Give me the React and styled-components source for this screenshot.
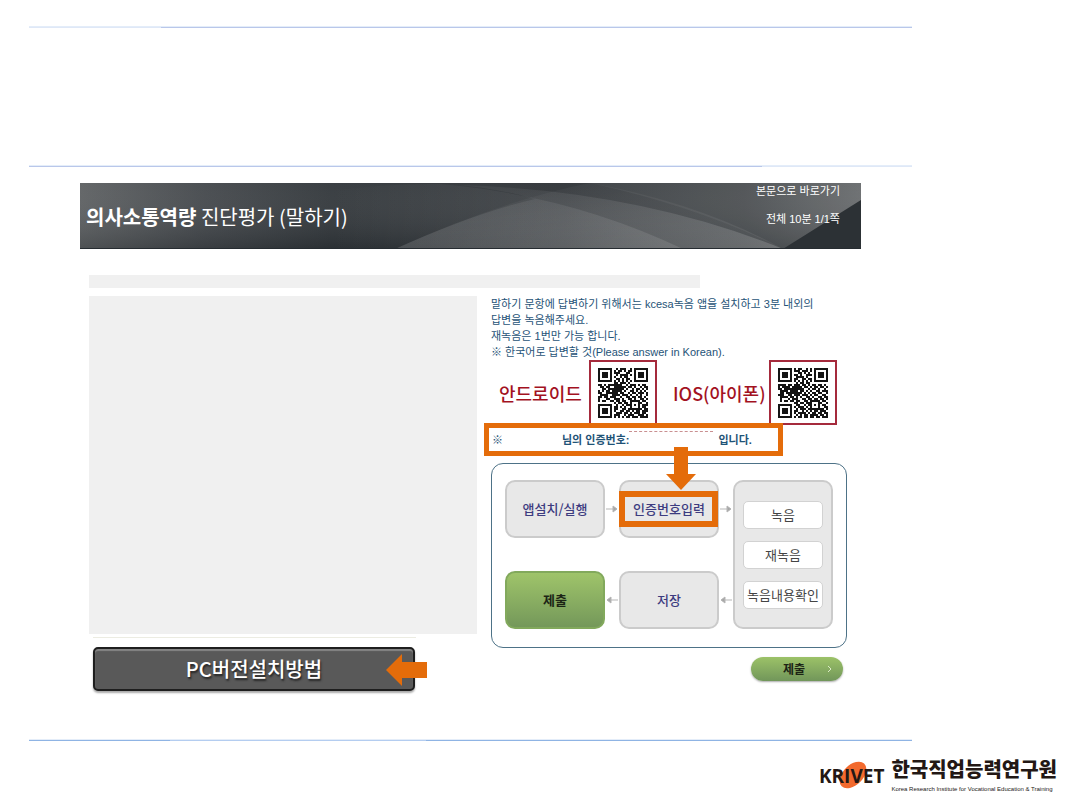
import styled, { createGlobalStyle } from "styled-components";

const COLORS = {
  orange: "#e46c0a",
  navy: "#1f5377",
  crimson: "#a3121f",
  step: "#3d3c80",
  panel: "#f0f0f0",
};

const QR_ANDROID = [
  "1111111001011100101111111",
  "1000001010110101101000001",
  "1011101011100011001011101",
  "1011101001011110101011101",
  "1011101010010110001011101",
  "1000001001101011001000001",
  "1111111010101010101111111",
  "0000000011011101000000000",
  "1101011111110010111010110",
  "0110110011111101101001011",
  "0011011111111010010110101",
  "1010110111110100110101010",
  "1100111111011001011011101",
  "0111100111101110100101001",
  "1101101110010011011011010",
  "1000110011101001101001101",
  "1011001101101100111110110",
  "0000000010110110100011001",
  "1111111001001011101010111",
  "1000001011010100100010110",
  "1011101011001101111111011",
  "1011101010011011010110111",
  "1011101001110110101110110",
  "1000001011100101110011101",
  "1111111010101011011101111",
];

const QR_IOS = [
  "1111111010110010101111111",
  "1000001011101110101000001",
  "1011101000110101001011101",
  "1011101011010011101011101",
  "1011101001111010001011101",
  "1000001011001101101000001",
  "1111111010101010101111111",
  "0000000001011011000000000",
  "1111011011101101011011010",
  "1011110111110110101101101",
  "1101111111111001011010010",
  "0111101111011010100110111",
  "0110111111110101011011001",
  "1110011011101110101100110",
  "0111101101010011010011011",
  "0100010111001101101101101",
  "0101101101100110111110110",
  "0000000011011011100011001",
  "1111111001100101101010110",
  "1000001010111010100010011",
  "1011101001011101111111101",
  "1011101011001010101101110",
  "1011101010111101011011011",
  "1000001001010110111101101",
  "1111111010110110110110111",
];

const INSTRUCTIONS = [
  "말하기 문항에 답변하기 위해서는 kcesa녹음 앱을 설치하고 3분 내외의",
  "답변을 녹음해주세요.",
  "재녹음은 1번만 가능 합니다.",
  "※ 한국어로 답변할 것(Please answer in Korean).",
];

const RECORD_ACTIONS = ["녹음", "재녹음", "녹음내용확인"];

function QrCode({ rows, label }) {
  return (
    <QrFrame>
      <svg width="50" height="50" viewBox="0 0 25 25" role="img" aria-label={label} shapeRendering="crispEdges">
        {rows.map((row, y) =>
          [...row].map((cell, x) =>
            cell === "1" ? <rect key={`${x}-${y}`} x={x} y={y} width="1" height="1" fill="#151515" /> : null
          )
        )}
      </svg>
    </QrFrame>
  );
}

function BannerArt() {
  return (
    <Art viewBox="0 0 781 66" preserveAspectRatio="none" aria-hidden="true">
      <defs>
        <linearGradient id="base" x1="0" y1="0" x2="1" y2="0">
          <stop offset="0" stopColor="#5c5f61" />
          <stop offset="0.16" stopColor="#42464a" />
          <stop offset="0.32" stopColor="#303539" />
          <stop offset="0.62" stopColor="#2d3135" />
          <stop offset="0.85" stopColor="#414548" />
          <stop offset="1" stopColor="#606365" />
        </linearGradient>
        <linearGradient id="shade" x1="0" y1="0" x2="0" y2="1">
          <stop offset="0" stopColor="#fff" stopOpacity="0.05" />
          <stop offset="1" stopColor="#14191d" stopOpacity="0.2" />
        </linearGradient>
        <linearGradient id="arch" x1="0" y1="0" x2="1" y2="0">
          <stop offset="0" stopColor="#fff" stopOpacity="0" />
          <stop offset="1" stopColor="#fff" stopOpacity="0.11" />
        </linearGradient>
        <linearGradient id="wave" x1="0" y1="0" x2="1" y2="1">
          <stop offset="0" stopColor="#fff" stopOpacity="0.03" />
          <stop offset="1" stopColor="#fff" stopOpacity="0.22" />
        </linearGradient>
      </defs>
      <rect width="781" height="66" fill="url(#base)" />
      <rect width="781" height="66" fill="url(#shade)" />
      <path d="M250 8 Q310 0 360 1 Q490 12 603 66 L250 66Z" fill="url(#arch)" />
      <path d="M315 66 Q420 18 510 0 Q620 20 703 66Z" fill="url(#wave)" opacity="0.4" />
      <path d="M380 2 Q560 8 703 66 L315 66 Q395 30 455 16 Q420 6 380 2Z" fill="url(#wave)" opacity="0.8" />
      <path d="M510 0 Q620 24 703 66 L781 17 L781 0Z" fill="#fff" opacity="0.05" />
      <path d="M703 66 L781 17 L781 66Z" fill="#2c3135" />
      <rect y="65" width="781" height="1" fill="#262c31" />
    </Art>
  );
}

function FlowArrow({ left }) {
  return (
    <svg width="12" height="10" viewBox="0 0 12 10" aria-hidden="true">
      {left ? (
        <path d="M12 5H4M5 2L1 5L5 8Z" stroke="#b5b5b5" strokeWidth="1" fill="#a5a5a5" />
      ) : (
        <path d="M0 5H8M7 2L11 5L7 8Z" stroke="#b5b5b5" strokeWidth="1" fill="#a5a5a5" />
      )}
    </svg>
  );
}

function App() {
  return (
    <Page>
      <GlobalStyle />
      <Rule $from="#dfe8f7" $mid="#b9c7ea" $end="#b9c7ea" $a="15%" $b="100%" />
      <TitleArea />
      <Rule $from="#b9c7ea" $mid="#b9c7ea" $end="#dfe8f7" $a="50%" $b="83%" />

      <Content>
        <Banner>
          <BannerArt />
          <BannerTitle>
            <strong>의사소통역량</strong> 진단평가 (말하기)
          </BannerTitle>
          <BannerMeta>
            <SkipLink href="#answer">본문으로 바로가기</SkipLink>
            <span>전체 10분 1/1쪽</span>
          </BannerMeta>
        </Banner>

        <Body>
          <Strip />
          <Columns>
            <Left>
              <Question />
              <Divider />
              <PcButton type="button">
                PC버전설치방법
                <PcArrow width="41" height="32" viewBox="0 0 41 32" aria-hidden="true">
                  <path d="M0 16L16 0V8H41V24H16V32Z" fill={COLORS.orange} />
                </PcArrow>
              </PcButton>
            </Left>

            <Right id="answer">
              <Instructions>
                {INSTRUCTIONS.map((line) => (
                  <p key={line}>{line}</p>
                ))}
              </Instructions>
              <QrRow>
                <QrLabel>안드로이드</QrLabel>
                <QrCode rows={QR_ANDROID} label="안드로이드 QR" />
                <QrLabel $second>IOS(아이폰)</QrLabel>
                <QrCode rows={QR_IOS} label="IOS QR" />
              </QrRow>
              <Notice>
                <span>※</span>
                <NoticeName>님의 인증번호:</NoticeName>
                <CodeSlot />
                <span>입니다.</span>
                <DownArrow width="30" height="43" viewBox="0 0 30 43" aria-hidden="true">
                  <path d="M8 0H22V27H30L15 43L0 27H8Z" fill={COLORS.orange} />
                </DownArrow>
              </Notice>

              <Diagram>
                <Step>앱설치/실행</Step>
                <FlowArrow />
                <Step>
                  인증번호입력
                  <Highlight />
                </Step>
                <FlowArrow />
                <RecordStep>
                  {RECORD_ACTIONS.map((action) => (
                    <RecordAction key={action}>{action}</RecordAction>
                  ))}
                </RecordStep>
                <Step $done>제출</Step>
                <FlowArrow left />
                <Step>저장</Step>
                <FlowArrow left />
              </Diagram>

              <SubmitButton type="button">
                제출
                <svg width="5" height="8" viewBox="0 0 5 8" aria-hidden="true">
                  <path d="M1 1L4 4L1 7" stroke="#dcebc8" fill="none" />
                </svg>
              </SubmitButton>
            </Right>
          </Columns>
        </Body>
      </Content>

      <Rule $from="#8fb4e4" $mid="#b4cdf0" $end="#8fb4e4" $a="16%" $b="45%" />

      <Footer>
        <Krivet>
          <svg width="36" height="30" viewBox="0 0 36 30" aria-hidden="true">
            <ellipse cx="18" cy="15" rx="16" ry="10" transform="rotate(-45 18 15)" fill="#f26a2e" />
          </svg>
          <span>KRIVET</span>
        </Krivet>
        <Institute>
          <InstituteName>한국직업능력연구원</InstituteName>
          <InstituteSub>Korea Research Institute for Vocational Education &amp; Training</InstituteSub>
        </Institute>
      </Footer>
    </Page>
  );
}

const GlobalStyle = createGlobalStyle`
  * {
    box-sizing: border-box;
  }

  body {
    margin: 0;
    background: #fff;
    font-family: "Liberation Sans", "Noto Sans CJK KR", sans-serif;
  }

  p, h1 {
    margin: 0;
  }
`;

const Page = styled.div`
  padding-top: 26px;
`;

const Rule = styled.div`
  height: 2px;
  margin: 0 168px 0 29px;
  background: linear-gradient(
    to right,
    ${({ $from }) => $from} ${({ $a }) => $a},
    ${({ $mid }) => $mid} ${({ $a }) => $a},
    ${({ $mid }) => $mid} ${({ $b }) => $b},
    ${({ $end }) => $end} ${({ $b }) => $b}
  );
  border-top: 1px solid #e4edf9;
`;

const TitleArea = styled.div`
  height: 137px;
`;

const Content = styled.main`
  margin: 16px 219px 48px 80px;
`;

const Banner = styled.header`
  position: relative;
  display: flex;
  justify-content: space-between;
  height: 66px;
  padding: 0 21px 0 6px;
  color: #fff;
  background: #33383c;
`;

const Art = styled.svg`
  position: absolute;
  inset: 0;
  width: 100%;
  height: 100%;
`;

const BannerTitle = styled.h1`
  position: relative;
  align-self: center;
  padding-top: 2px;
  font-family: "Noto Sans CJK KR", sans-serif;
  font-size: 20px;
  font-weight: 400;
  line-height: 24px;
  white-space: nowrap;

  strong {
    font-weight: 700;
  }
`;

const BannerMeta = styled.div`
  position: relative;
  display: flex;
  flex-direction: column;
  align-items: flex-end;
  gap: 12px;
  font-size: 11px;
  line-height: 16px;
`;

const SkipLink = styled.a`
  color: inherit;
  text-decoration: none;
`;

const Body = styled.div`
  padding: 26px 0 0 9px;
`;

const Strip = styled.div`
  height: 13px;
  margin-right: 161px;
  background: ${COLORS.panel};
`;

const Columns = styled.div`
  display: grid;
  grid-template-columns: minmax(0, 388fr) minmax(377px, 377fr);
  gap: 7px;
  margin-top: 8px;
`;

const Left = styled.section`
  display: flex;
  flex-direction: column;
`;

const Question = styled.div`
  height: 338px;
  background: ${COLORS.panel};
`;

const Divider = styled.div`
  height: 1px;
  margin: 3px 61px 0 4px;
  background: #ecece2;
`;

const PcButton = styled.button`
  position: relative;
  height: 44px;
  margin: 9px 62px 0 4px;
  padding: 0;
  border: 2px solid #1e1e1e;
  border-radius: 5px;
  background: #595959;
  box-shadow: inset 0 2px 1px #858585, 0 2px 2px #aaa;
  color: #fff;
  font-family: "Noto Sans CJK KR", sans-serif;
  font-size: 20px;
  font-weight: 500;
  line-height: 24px;
  text-shadow: 1px 2px 2px #222;
`;

const PcArrow = styled.svg`
  position: absolute;
  top: 5px;
  right: -14px;
`;

const Right = styled.section`
  padding-right: 14px;
`;

const Instructions = styled.div`
  padding-left: 7px;
  color: ${COLORS.navy};
  font-size: 11px;
  line-height: 16px;
  white-space: nowrap;
`;

const QrRow = styled.div`
  display: flex;
  align-items: center;
  padding-left: 15px;
`;

const QrLabel = styled.span`
  width: ${({ $second }) => ($second ? "112px" : "90px")};
  padding-left: ${({ $second }) => ($second ? "16px" : "0")};
  color: ${COLORS.crimson};
  font-family: "Noto Sans CJK KR", sans-serif;
  font-size: 18px;
  font-weight: 500;
  line-height: 24px;
  white-space: nowrap;
`;

const QrFrame = styled.div`
  display: grid;
  place-items: center;
  width: 68px;
  height: 65px;
  border: 2px solid #a52a3c;
  background: #fff;
`;

const Notice = styled.div`
  position: relative;
  display: flex;
  align-items: center;
  width: 299px;
  height: 33px;
  margin-top: -2px;
  padding-left: 3px;
  border: 5px solid ${COLORS.orange};
  background: #fff;
  color: ${COLORS.navy};
  font-size: 11px;
  font-weight: 700;
  line-height: 16px;
  white-space: nowrap;
`;

const NoticeName = styled.span`
  margin-left: 59px;
`;

const CodeSlot = styled.span`
  align-self: flex-start;
  flex: none;
  width: 84px;
  margin: 3px 5px 0 0;
  border-top: 1px dashed #c98f90;
`;

const DownArrow = styled.svg`
  position: absolute;
  z-index: 2;
  top: 19px;
  left: 177px;
`;

const Diagram = styled.div`
  display: grid;
  grid-template-columns: 100px 14px 100px 14px 100px;
  grid-template-rows: 58px 58px;
  row-gap: 33px;
  align-items: center;
  justify-items: center;
  justify-content: center;
  margin: 7px 0 0 7px;
  padding: 16px 0 18px;
  border: 1px solid #4d7287;
  border-radius: 12px;
`;

const Step = styled.div`
  position: relative;
  display: grid;
  place-items: center;
  width: 100%;
  height: 100%;
  border: 2px solid ${({ $done }) => ($done ? "#82a95c" : "#cbcbcb")};
  border-radius: 10px;
  background: ${({ $done }) => ($done ? "linear-gradient(#9fc46a, #74985a)" : "#e8e8e8")};
  color: ${({ $done }) => ($done ? "#1c2415" : COLORS.step)};
  font-family: "Noto Sans CJK KR", sans-serif;
  font-size: 13px;
  font-weight: ${({ $done }) => ($done ? 700 : 500)};
  line-height: 20px;
  white-space: nowrap;
`;

const Highlight = styled.div`
  position: absolute;
  top: 9px;
  left: -2px;
  right: -1px;
  height: 36px;
  border: 6px solid ${COLORS.orange};
`;

const RecordStep = styled.div`
  grid-column: 5;
  grid-row: 1 / 3;
  display: flex;
  flex-direction: column;
  justify-content: center;
  gap: 12px;
  width: 100%;
  height: 100%;
  padding: 0 8px;
  border: 2px solid #cbcbcb;
  border-radius: 10px;
  background: #e8e8e8;
`;

const RecordAction = styled.div`
  display: grid;
  place-items: center;
  height: 28px;
  border: 1px solid #d2d2d2;
  border-radius: 5px;
  background: #fff;
  color: #444;
  font-family: "Noto Sans CJK KR", sans-serif;
  font-size: 13px;
  line-height: 20px;
  white-space: nowrap;
`;

const SubmitButton = styled.button`
  display: flex;
  align-items: center;
  justify-content: flex-end;
  gap: 22px;
  width: 92px;
  height: 24px;
  margin: 9px 4px 0 auto;
  padding: 0 11px 0 0;
  border: 0;
  border-radius: 12px;
  background: linear-gradient(#9cc268, #71965a);
  box-shadow: 0 1px 2px #aaa;
  color: #1c2415;
  font-family: "Noto Sans CJK KR", sans-serif;
  font-size: 12px;
  font-weight: 700;
  line-height: 20px;
`;

const Footer = styled.footer`
  display: flex;
  justify-content: flex-end;
  gap: 7px;
  padding: 14px 23px 0 0;
  color: #231815;
`;

const Krivet = styled.div`
  position: relative;
  padding-top: 7px;
  font-family: "Open Sans", sans-serif;
  font-size: 19px;
  font-weight: 700;
  line-height: 28px;

  svg {
    position: absolute;
    top: 5px;
    left: 16px;
  }

  span {
    position: relative;
  }
`;

const Institute = styled.div`
  display: flex;
  flex-direction: column;
`;

const InstituteName = styled.strong`
  font-family: "Noto Sans CJK KR", sans-serif;
  font-size: 20px;
  font-weight: 900;
  line-height: 28px;
`;

const InstituteSub = styled.span`
  padding-top: 1px;
  font-family: "Liberation Sans", sans-serif;
  font-size: 6px;
  line-height: 10px;
  white-space: nowrap;
`;

export default App;
